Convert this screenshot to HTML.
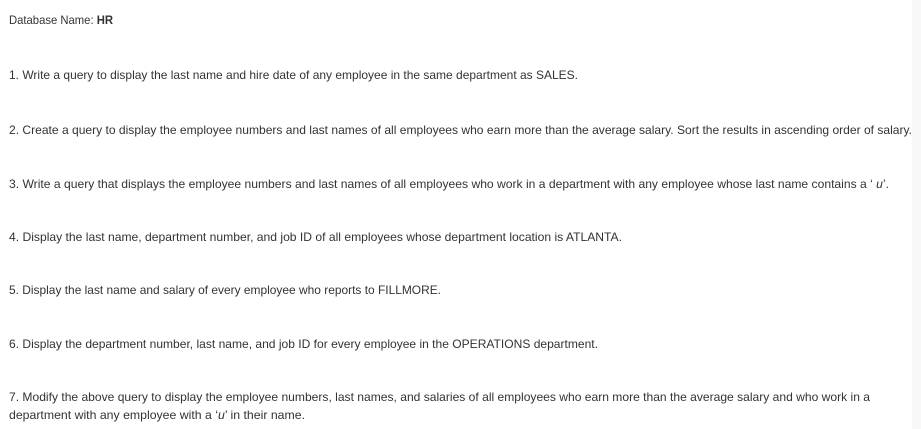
<!DOCTYPE html>
<html><head><meta charset="utf-8"><style>
html,body{margin:0;padding:0;background:#fff;width:921px;height:429px;overflow:hidden}
svg{display:block}
text{font-family:"Liberation Sans",sans-serif;font-size:12px;fill:#333}
</style></head><body>
<svg width="921" height="429" xmlns="http://www.w3.org/2000/svg">
<rect x="912" y="0" width="9" height="429" fill="#f8f8f8"/>
<text x="9" y="24" textLength="104" lengthAdjust="spacingAndGlyphs">Database Name: <tspan font-weight="bold">HR</tspan></text>
<text x="9" y="79" textLength="569" lengthAdjust="spacingAndGlyphs">1. Write a query to display the last name and hire date of any employee in the same department as SALES.</text>
<text x="9" y="134" textLength="903" lengthAdjust="spacingAndGlyphs">2. Create a query to display the employee numbers and last names of all employees who earn more than the average salary. Sort the results in ascending order of salary.</text>
<text x="9" y="188" textLength="880" lengthAdjust="spacingAndGlyphs">3. Write a query that displays the employee numbers and last names of all employees who work in a department with any employee whose last name contains a ‘ <tspan font-style="italic">u</tspan>’.</text>
<text x="9" y="241" textLength="613" lengthAdjust="spacingAndGlyphs">4. Display the last name, department number, and job ID of all employees whose department location is ATLANTA.</text>
<text x="9" y="294" textLength="432" lengthAdjust="spacingAndGlyphs">5. Display the last name and salary of every employee who reports to FILLMORE.</text>
<text x="9" y="348" textLength="589" lengthAdjust="spacingAndGlyphs">6. Display the department number, last name, and job ID for every employee in the OPERATIONS department.</text>
<text x="9" y="401" textLength="861" lengthAdjust="spacingAndGlyphs">7. Modify the above query to display the employee numbers, last names, and salaries of all employees who earn more than the average salary and who work in a</text>
<text x="9" y="419" textLength="296" lengthAdjust="spacingAndGlyphs">department with any employee with a ‘<tspan font-style="italic">u</tspan>’ in their name.</text>
</svg>
</body></html>
